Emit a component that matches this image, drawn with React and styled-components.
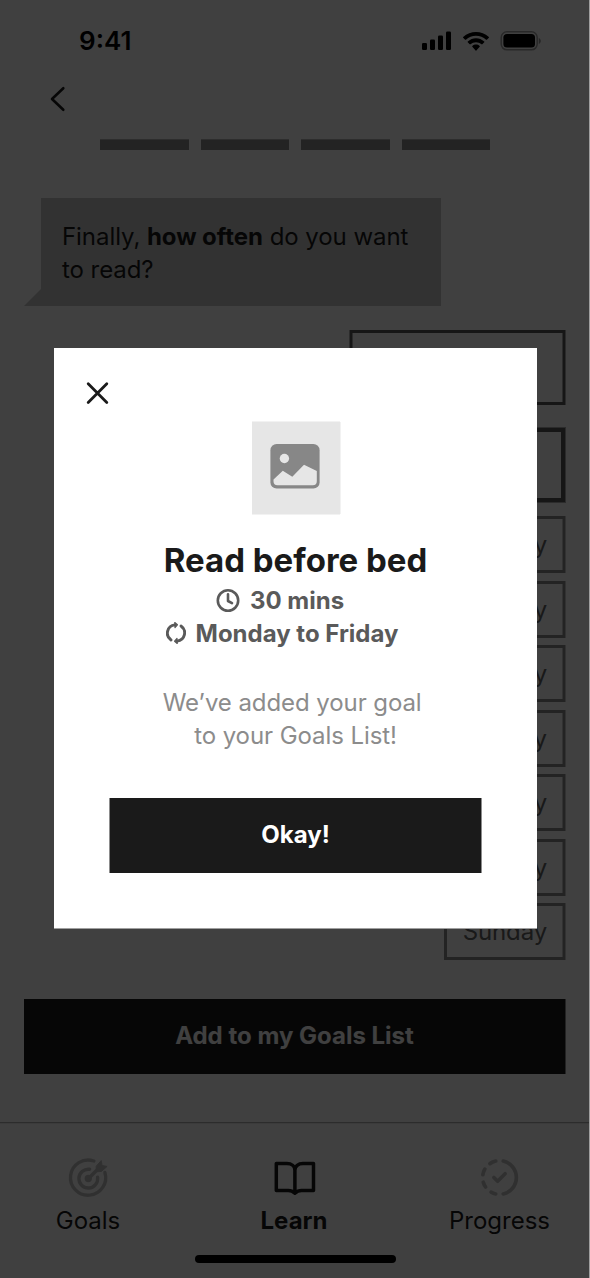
import React, { useState } from "react";
import styled, { createGlobalStyle, css } from "styled-components";
import { TbProgressCheck } from "react-icons/tb";

const GlobalStyle = createGlobalStyle`
  * {
    box-sizing: border-box;
  }
  body {
    margin: 0;
    font-family: Inter, "Liberation Sans", sans-serif;
    font-size: 24px;
    line-height: 33px;
    color: #1a1a1a;
  }
  button {
    font: inherit;
    color: inherit;
    padding: 0;
    border: none;
    background: none;
    cursor: pointer;
  }
  svg {
    display: block;
    flex: none;
  }
`;

const Screen = styled.div`
  position: relative;
  width: 590px;
  height: 1278px;
  border-right: 1px solid #9f9f9f;
  background-color: white;
  display: flex;
  flex-direction: column;
  overflow: hidden;
`;

const StatusBar = styled.div`
  height: 82px;
  padding: 0 48px 0 79px;
  display: flex;
  align-items: center;
  justify-content: space-between;
  color: black;
`;
const Time = styled.div`
  font-size: 26px;
  font-weight: 600;
  padding-bottom: 2px;
`;
const StatusIcons = styled.div`
  display: flex;
  align-items: center;
  gap: 11px;
`;

const BackButton = styled.button`
  align-self: flex-start;
  margin: 3px 0 0 49px;
  height: 28px;
`;

const Steps = styled.div`
  display: flex;
  gap: 12px;
  margin: 26px 0 0 100.4px;
`;
const Step = styled.div`
  width: 88.5px;
  height: 11px;
  background-color: #8c8c8c;
  border-top: 1px solid #b4b4b4;
`;

const Bubble = styled.div`
  display: flex;
  align-items: flex-end;
  margin: 48px 0 0 24px;
`;
const BubbleTail = styled.div`
  width: 17px;
  height: 17px;
  background-color: #c8c8c8;
  clip-path: polygon(100% 0, 100% 100%, 0 100%);
`;
const BubbleText = styled.div`
  width: 400px;
  height: 108px;
  padding: 22px 21px 20px;
  letter-spacing: -0.06px;
  background-color: #c8c8c8;
`;

const Answers = styled.div`
  display: flex;
  flex-direction: column;
  align-items: flex-end;
  margin: 24px 24px 0 0;
`;
const Answer = styled.div`
  width: 215px;
  height: 75px;
  border: solid #585858;
  ${props =>
    props.isSelected
      ? css`
          height: 74px;
          margin-top: 23px;
          border-width: 4px;
          box-shadow: 0 0 0 1px #acacac;
        `
      : css`
          border-width: 3px 2px;
          box-shadow: 1px 0 #acacac, -1px 0 #acacac, inset 1px 0 #acacac,
            inset -1px 0 #acacac;
        `}
`;
const Days = styled.div`
  display: flex;
  flex-direction: column;
  align-items: flex-end;
  gap: 7.5px;
  margin-top: 14px;
`;
const Day = styled.button`
  height: 57px;
  padding: 0 16px;
  border: 3px solid #8c8c8c;
  border-right-width: 2px;
  box-shadow: 1px 0 #c6c6c6, inset -1px 0 #c6c6c6;
  letter-spacing: -0.12px;
  color: #646464;
`;

const PrimaryButton = styled.button`
  height: 75px;
  padding-bottom: 2px;
  background-color: #1a1a1a;
  color: white;
  font-weight: 700;
`;
const AddButton = styled(PrimaryButton)`
  width: 541px;
  margin: 39px 0 0 24px;
  box-shadow: 1px 0 #8c8c8c;
`;

const NavBar = styled.div`
  display: grid;
  grid-template-columns: 176px 236px 175px;
  height: 133px;
  margin-top: 48px;
  padding-top: 32px;
  border-top: 1px solid #b0b0b0;
  box-shadow: inset 0 1px #ececec;
`;
const NavItem = styled.button`
  display: flex;
  flex-direction: column;
  align-items: center;
  height: 82px;
  font-weight: ${props => (props.isActive ? 700 : 400)};
`;
const NavIcon = styled.div`
  height: 45px;
  margin-bottom: 4px;
  color: ${props => (props.isActive ? "#1a1a1a" : "#c0c0c0")};
`;
const HomeIndicator = styled.div`
  width: 201px;
  height: 8px;
  border-radius: 4px;
  margin-left: 195px;
  background-color: black;
`;

const Overlay = styled.div`
  position: absolute;
  inset: 0;
  padding: 348px 52px 0 54px;
  background-color: rgba(0, 0, 0, 0.75);
`;
const Dialog = styled.div`
  display: flex;
  flex-direction: column;
  align-items: center;
  height: 581px;
  background-color: white;
  border-bottom: 1px solid #9f9f9f;
`;
const CloseButton = styled.button`
  align-self: flex-start;
  margin: 33px 0 0 31px;
  height: 24px;
`;
const Picture = styled.div`
  display: flex;
  align-items: center;
  justify-content: center;
  width: 88px;
  height: 92px;
  padding: 0 2px 4px 0;
  margin: 17px 0 0 1px;
  background-color: #e6e6e6;
  box-shadow: 1px 0 #f2f2f2, 0 1px #f2f2f2, 0 -1px #f2f2f2;
`;
const Title = styled.div`
  margin: 25px 0 3px;
  font-size: 33px;
  line-height: 42px;
  font-weight: 700;
`;
const Detail = styled.div`
  display: flex;
  align-items: center;
  gap: ${props => props.gap};
  margin-right: ${props => props.shift};
  height: 33px;
  font-weight: 700;
  color: #5a5a5a;
`;
const Message = styled.div`
  margin-top: 36px;
  text-align: center;
  white-space: pre-wrap;
  letter-spacing: -0.08px;
  color: #8c8c8c;
`;
const OkayButton = styled(PrimaryButton)`
  width: 373px;
  margin: 46px 0 0 0;
  border: solid #8c8c8c;
  border-width: 0 1px;
`;

const SignalIcon = () => (
  <svg width="30" height="20" viewBox="0 0 30 20">
    <rect x="0" y="12" width="5" height="7" rx="1.3" />
    <rect x="8" y="8.5" width="5" height="10.5" rx="1.3" />
    <rect x="16" y="4.5" width="5" height="14.5" rx="1.3" />
    <rect x="24" y="0.5" width="5" height="18.5" rx="1.3" />
  </svg>
);

const WifiIcon = () => (
  <svg width="26" height="19" viewBox="0 0 17.14 12.5">
    <path d="M8.57 2.47c2.49 0 4.88.92 6.68 2.57.14.13.35.13.49 0l1.3-1.26a.35.35 0 0 0 0-.5c-4.74-4.37-12.2-4.37-16.93 0a.35.35 0 0 0 0 .5l1.29 1.26c.14.13.35.13.49 0a9.88 9.88 0 0 1 6.68-2.57Z" />
    <path d="M8.57 6.69c1.36 0 2.67.51 3.67 1.43.14.13.35.13.48 0l1.29-1.32a.37.37 0 0 0 0-.52c-3.07-2.95-7.81-2.95-10.88 0a.37.37 0 0 0 0 .52l1.29 1.32c.13.13.34.13.48 0a5.43 5.43 0 0 1 3.67-1.43Z" />
    <path d="M11.09 9.48a.4.4 0 0 1-.1.28l-2.18 2.46a.32.32 0 0 1-.48 0L6.15 9.76a.4.4 0 0 1 .01-.56c1.39-1.31 3.43-1.31 4.82 0 .07.07.11.17.11.28Z" />
  </svg>
);

const BatteryIcon = () => (
  <svg width="41" height="20" viewBox="0 0 41 20">
    <rect
      x="1.2"
      y="0.8"
      width="36"
      height="18"
      rx="5.7"
      fill="none"
      stroke="#a0a0a0"
      strokeWidth="1.5"
    />
    <rect x="3.4" y="3" width="31.6" height="13.6" rx="3.6" />
    <path d="M38.8 7v6c1.2-.5 2-1.7 2-3s-.8-2.5-2-3Z" fill="#989898" />
  </svg>
);

const ChevronIcon = () => (
  <svg width="18" height="28" viewBox="0 0 18 28" fill="none">
    <path
      d="M14.3 3.2 3 14l11.3 10.8"
      stroke="#1a1a1a"
      strokeWidth="2.6"
      strokeLinecap="round"
      strokeLinejoin="round"
    />
  </svg>
);

const CloseIcon = () => (
  <svg width="24" height="24" viewBox="0 0 24 24" fill="none">
    <path
      d="m3.2 2.8 18.6 18.6m0-18.6L3.2 21.4"
      stroke="#1a1a1a"
      strokeWidth="2.8"
      strokeLinecap="round"
    />
  </svg>
);

const PictureIcon = () => (
  <svg width="50" height="46" viewBox="0 0 50 46">
    <rect x="0.4" y="1" width="49.2" height="44.6" rx="6.2" fill="#878787" />
    <circle cx="14.4" cy="15.5" r="4.7" fill="#e6e6e6" />
    <path
      d="m3.5 36.5 9.3-8.7 9.5 6L34 21.7 46.8 28v10.2a4 4 0 0 1-4 4H7.5a4 4 0 0 1-4-4Z"
      fill="#e6e6e6"
    />
  </svg>
);

const ClockIcon = () => (
  <svg width="24" height="24" viewBox="0 0 24 24" fill="none" stroke="currentColor">
    <circle cx="12" cy="11.5" r="10.2" strokeWidth="2.6" />
    <path
      d="M12 5.3V12l4 2.2"
      strokeWidth="2.6"
      strokeLinecap="round"
      strokeLinejoin="round"
    />
  </svg>
);

const RepeatIcon = () => (
  <svg width="20" height="24" viewBox="0 0 20 24" fill="none" stroke="currentColor">
    <path
      d="M8.8 2.9A8.3 8.3 0 0 0 5 18M11.2 19.1A8.3 8.3 0 0 0 15 4"
      strokeWidth="2.9"
      strokeLinecap="round"
    />
    <path
      d="m8.8.5 2.6 2.3-2.4 2.8ZM11.2 21.500l-2.600-2.300 2.400-2.800Z"
      fill="currentColor"
      strokeWidth="1.2"
      strokeLinejoin="round"
    />
  </svg>
);

const TargetIcon = () => (
  <svg width="45" height="45" viewBox="0 -0.8 45 45" fill="none" stroke="currentColor">
    <path
      d="M27.9 5.2A17.6 17.6 0 1 0 38.9 16.6M23.6 13.5A9.4 9.4 0 1 0 31.6 21.5"
      strokeWidth="3.4"
      strokeLinecap="round"
    />
    <path d="m22.5 22.7 9.5-9.5" strokeWidth="3.6" />
    <circle cx="22.3" cy="22.7" r="3.7" fill="currentColor" stroke="none" />
    <path
      d="m30.2 10.4 5-5.6.9 4.9 5 .9-5.6 5-5.3.4Z"
      fill="currentColor"
      strokeWidth="1"
      strokeLinejoin="round"
    />
  </svg>
);

const BookIcon = () => (
  <svg width="45" height="45" viewBox="0 0 45 45" fill="none" stroke="currentColor">
    <path
      d="M22.9 38.2V15.3c0-4.5-3.5-6.7-8-6.7H4.3v26.8h12c2.5 0 4.3.6 6.6 2.8 2.3-2.2 4.1-2.8 6.6-2.8h12V8.6H30.900c-4.500 0-8 2.200-8 6.700"
      strokeWidth="3.5"
      strokeLinecap="round"
      strokeLinejoin="round"
    />
  </svg>
);

const days = [
  "Monday",
  "Tuesday",
  "Wednesday",
  "Thursday",
  "Friday",
  "Saturday",
  "Sunday"
];

const navItems = [
  { name: "goals", title: "Goals", icon: <TargetIcon /> },
  { name: "learn", title: "Learn", icon: <BookIcon /> },
  { name: "progress", title: "Progress", icon: <TbProgressCheck size={45} /> }
];

const GoalDialog = ({ onClose }) => (
  <Overlay>
    <Dialog>
      <CloseButton onClick={onClose}>
        <CloseIcon />
      </CloseButton>
      <Picture>
        <PictureIcon />
      </Picture>
      <Title>Read before bed</Title>
      <Detail gap="10px" shift="31px">
        <ClockIcon />
        30 mins
      </Detail>
      <Detail gap="10px" shift="27px">
        <RepeatIcon />
        Monday to Friday
      </Detail>
      <Message>
        We’ve added your goal{"\u00a0\n"}
        to your Goals List!
      </Message>
      <OkayButton onClick={onClose}>Okay!</OkayButton>
    </Dialog>
  </Overlay>
);

const App = () => {
  const [isDialogOpen, setIsDialogOpen] = useState(true);
  const [activeNav, setActiveNav] = useState("learn");

  return (
    <>
      <GlobalStyle />
      <Screen>
        <StatusBar>
          <Time>9:41</Time>
          <StatusIcons>
            <SignalIcon />
            <WifiIcon />
            <BatteryIcon />
          </StatusIcons>
        </StatusBar>
        <BackButton>
          <ChevronIcon />
        </BackButton>
        <Steps>
          <Step />
          <Step />
          <Step />
          <Step />
        </Steps>
        <Bubble>
          <BubbleTail />
          <BubbleText>
            Finally, <b>how often</b> do you want to read?
          </BubbleText>
        </Bubble>
        <Answers>
          <Answer />
          <Answer isSelected />
          <Days>
            {days.map(day => (
              <Day key={day}>{day}</Day>
            ))}
          </Days>
        </Answers>
        <AddButton onClick={() => setIsDialogOpen(true)}>
          Add to my Goals List
        </AddButton>
        <NavBar>
          {navItems.map(item => (
            <NavItem
              key={item.name}
              isActive={item.name === activeNav}
              onClick={() => setActiveNav(item.name)}
            >
              <NavIcon isActive={item.name === activeNav}>{item.icon}</NavIcon>
              {item.title}
            </NavItem>
          ))}
        </NavBar>
        <HomeIndicator />
        {isDialogOpen && <GoalDialog onClose={() => setIsDialogOpen(false)} />}
      </Screen>
    </>
  );
};

export default App;
